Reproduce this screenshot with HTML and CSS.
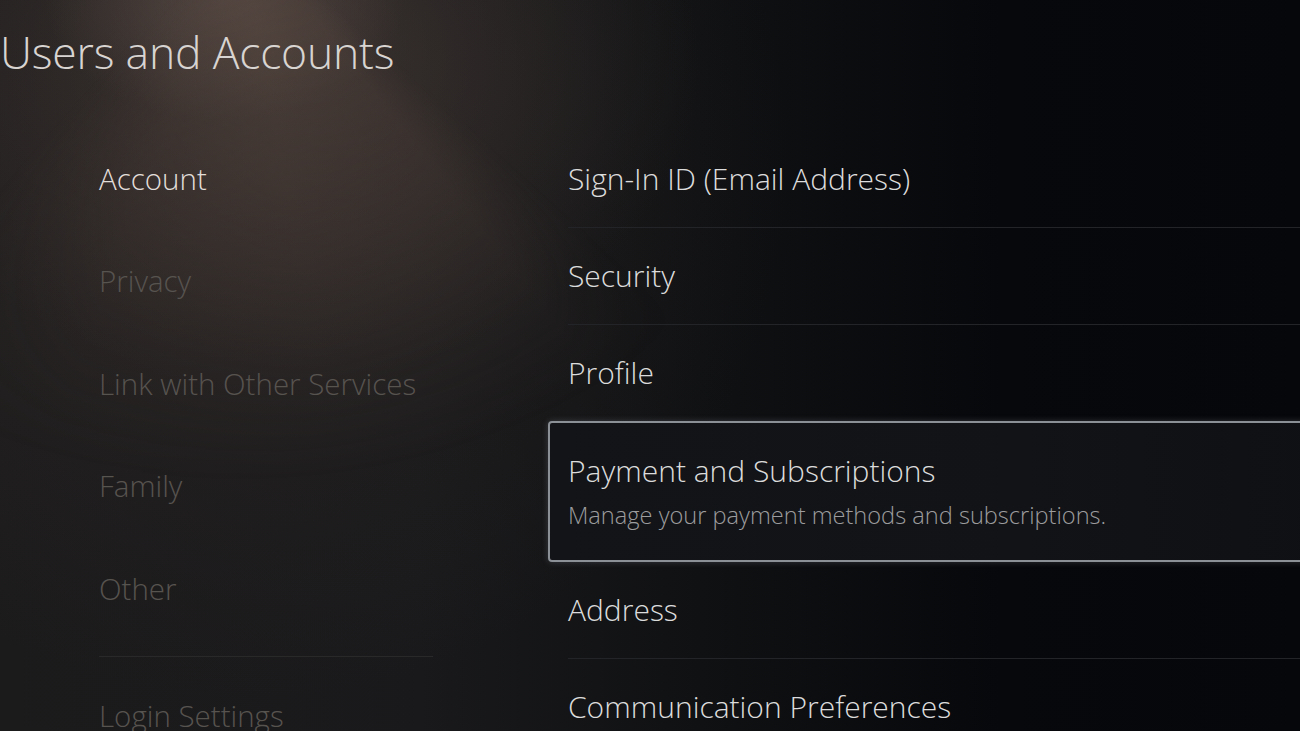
FILE: index.html
```html
<!DOCTYPE html>
<html lang="en">
<head>
<meta charset="utf-8">
<title>Users and Accounts</title>
<link rel="stylesheet" href="styles.css">
</head>
<body>
<div class="screen">
  <h1 class="title">Users and Accounts</h1>
  <div class="main">
    <nav class="nav">
      <div class="nav-item active">Account</div>
      <div class="nav-item">Privacy</div>
      <div class="nav-item">Link with Other Services</div>
      <div class="nav-item">Family</div>
      <div class="nav-item">Other</div>
      <div class="nav-sep"></div>
      <div class="nav-item">Login Settings</div>
    </nav>
    <section class="list">
      <div class="row"><span class="row-title">Sign-In ID (Email Address)</span></div>
      <div class="row"><span class="row-title">Security</span></div>
      <div class="row"><span class="row-title">Profile</span></div>
      <div class="row focus">
        <span class="row-title">Payment and Subscriptions</span>
        <span class="row-desc">Manage your payment methods and subscriptions.</span>
      </div>
      <div class="row"><span class="row-title">Address</span></div>
      <div class="row"><span class="row-title">Communication Preferences</span></div>
    </section>
  </div>
</div>
</body>
</html>
```

FILE: styles.css
```css
html, body {
  margin: 0;
  padding: 0;
}
body {
  width: 1300px;
  height: 731px;
  overflow: hidden;
  font-family: "Open Sans", "Noto Sans", "DejaVu Sans", sans-serif;
  font-weight: 300;
  background-color: #0a0b0d;
  background-image:
    radial-gradient(ellipse 180px 120px at 225px 0px, rgba(120, 100, 92, 0.45), rgba(120, 100, 92, 0) 100%),
    radial-gradient(ellipse 420px 320px at 280px 60px, rgba(92, 76, 68, 0.4), rgba(92, 76, 68, 0) 100%),
    radial-gradient(ellipse 540px 540px at 250px 160px, rgba(60, 50, 46, 0.35), rgba(60, 50, 46, 0) 100%),
    linear-gradient(90deg, #1c1b1c 0px, #19191b 420px, #101113 700px, #07080b 1000px, #06070a 1300px);
}
.screen {
  position: relative;
  height: 731px;
  display: flex;
  flex-direction: column;
}
.screen::before {
  content: "";
  position: absolute;
  left: 0;
  top: 0;
  width: 1300px;
  height: 731px;
  pointer-events: none;
  background: conic-gradient(from 0deg at 240px -80px,
    rgba(80, 66, 60, 0) 0deg,
    rgba(80, 66, 60, 0) 132deg,
    rgba(80, 66, 60, 0.55) 142deg,
    rgba(85, 70, 63, 0.6) 170deg,
    rgba(80, 66, 60, 0.45) 200deg,
    rgba(80, 66, 60, 0) 222deg,
    rgba(80, 66, 60, 0) 360deg);
  -webkit-mask-image: radial-gradient(ellipse 620px 520px at 240px -40px, #000 0%, rgba(0,0,0,0.6) 45%, rgba(0,0,0,0) 100%);
  mask-image: radial-gradient(ellipse 620px 520px at 240px -40px, #000 0%, rgba(0,0,0,0.6) 45%, rgba(0,0,0,0) 100%);
}
.title, .main {
  position: relative;
}
.title {
  margin: 0;
  padding: 24px 0 0 0;
  height: 105px;
  flex: none;
  box-sizing: border-box;
  font-size: 44.5px;
  font-weight: 300;
  line-height: 56px;
  color: #d8d4d1;
  letter-spacing: -0.2px;
}
.main {
  display: flex;
  flex: 1;
  min-height: 0;
}
.nav {
  width: 334px;
  padding: 22px 0 0 99px;
  flex: none;
  display: flex;
  flex-direction: column;
}
.nav-item {
  flex: none;
  height: 102.5px;
  display: flex;
  align-items: center;
  font-size: 29.5px;
  color: #57534f;
  white-space: nowrap;
}
.nav-item.active {
  color: #e2deda;
}
.nav-sep {
  flex: none;
  height: 1px;
  margin: 16px 0 8px 0;
  background: #2a2929;
}
.list {
  margin-left: 115px;
  padding-top: 26px;
  width: 800px;
  flex: none;
  display: flex;
  flex-direction: column;
}
.row {
  flex: none;
  margin-left: 20px;
  height: 97px;
  box-sizing: border-box;
  border-bottom: 1px solid #232427;
  display: flex;
  flex-direction: column;
  justify-content: center;
}
.row-title {
  font-size: 30px;
  color: #dcdcdc;
  white-space: nowrap;
  line-height: 40px;
}
.row-desc {
  margin-top: 8px;
  font-size: 23.6px;
  line-height: 32px;
  color: #9c9c9e;
  white-space: nowrap;
}
.row.focus {
  margin-left: 0;
  margin-top: -1px;
  height: 141px;
  padding-left: 18px;
  padding-bottom: 2px;
  border: 2px solid #8b8f96;
  border-radius: 4px;
  background: linear-gradient(90deg, #131417 0%, #121316 60%, #0f1013 100%);
  box-shadow: 0 0 6px rgba(160, 170, 185, 0.25);
}
```
